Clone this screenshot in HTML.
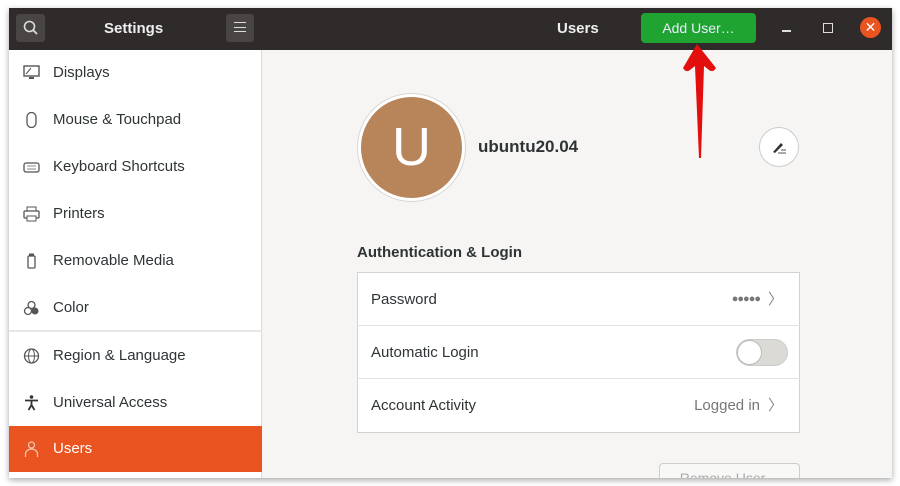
<!DOCTYPE html>
<html><head><style>
*{margin:0;padding:0;box-sizing:border-box}
body{width:900px;height:486px;background:#fff;font-family:"Liberation Sans",sans-serif;position:relative;overflow:hidden}
.win{position:absolute;left:9px;top:8px;width:883px;height:470px;background:#f6f5f4;box-shadow:0 2px 6px rgba(0,0,0,.35);overflow:hidden}
.hb{position:absolute;left:0;top:0;width:883px;height:42px;background:#2f2b2b}
.side{position:absolute;left:0;top:42px;width:253px;height:428px;background:#fff;border-right:1px solid #dcdad7}
.it{position:absolute;left:0;width:253px;height:46px;font-size:15px;color:#2e3436;line-height:46px;padding-left:44px}
.ic{position:absolute;left:14px;top:15px;width:17px;height:16px}
.a{position:absolute;color:#2e3436}
.row{position:absolute;left:0;width:442px;height:53px;border-bottom:1px solid #e4e2df;font-size:15px;line-height:53px;padding-left:13px;color:#2e3436}
</style></head><body>
<div class="win">
<div class="hb">
 <div style="position:absolute;left:7px;top:6px;width:29px;height:28px;background:#4a4545;border-radius:3px"></div>
 <svg style="position:absolute;left:14px;top:12px" width="16" height="16"><circle cx="6.5" cy="6.5" r="5" stroke="#ddd" stroke-width="1.6" fill="none"/><line x1="10" y1="10" x2="14" y2="14" stroke="#ddd" stroke-width="1.8"/></svg>
 <div style="position:absolute;left:95px;top:12px;color:#eee;font-weight:bold;font-size:15px">Settings</div>
 <div style="position:absolute;left:217px;top:6px;width:28px;height:28px;background:#4a4545;border-radius:3px"></div>
 <div style="position:absolute;left:225px;top:14px;width:12px;height:10px;border-top:1.5px solid #ddd;border-bottom:1.5px solid #ddd"></div>
 <div style="position:absolute;left:225px;top:18.5px;width:12px;height:1.5px;background:#ddd"></div>
 <div style="position:absolute;left:548px;top:12px;color:#eee;font-weight:bold;font-size:15px">Users</div>
 <div style="position:absolute;left:632px;top:5px;width:115px;height:30px;background:#1fa331;border-radius:4px;color:#eef;font-size:14px;text-align:center;line-height:30px">Add User…</div>
 <div style="position:absolute;left:773px;top:22px;width:9px;height:2px;background:#ddd"></div>
 <div style="position:absolute;left:814px;top:15px;width:10px;height:10px;border:1.5px solid #ddd"></div>
 <div style="position:absolute;left:851px;top:9px;width:21px;height:21px;border-radius:50%;background:#e95420;color:#fff;text-align:center;line-height:21px;font-size:14px">✕</div>
</div>
<div class="side">
 <div class="it" style="top:0px"><svg class="ic" viewBox="0 0 17 16"><rect x="1" y="1" width="15" height="10" fill="none" stroke="#555" stroke-width="1.4"/><rect x="6" y="12" width="5" height="2" fill="#555"/><path d="M3 9L8 3" stroke="#555"/></svg>Displays</div>
 <div class="it" style="top:47px"><svg class="ic" viewBox="0 0 17 16"><rect x="4" y="0.5" width="9" height="15" rx="4.5" fill="none" stroke="#555" stroke-width="1.3"/></svg>Mouse &amp; Touchpad</div>
 <div class="it" style="top:94px"><svg class="ic" viewBox="0 0 17 16"><rect x="1" y="4" width="15" height="9" rx="2" fill="none" stroke="#555" stroke-width="1.3"/><path d="M4 7h9M4 10h9" stroke="#888"/></svg>Keyboard Shortcuts</div>
 <div class="it" style="top:141px"><svg class="ic" viewBox="0 0 17 16"><rect x="4" y="1" width="9" height="4" fill="none" stroke="#555"/><rect x="1" y="5" width="15" height="7" rx="1" fill="none" stroke="#555" stroke-width="1.3"/><rect x="4" y="10" width="9" height="5" fill="#fff" stroke="#555"/></svg>Printers</div>
 <div class="it" style="top:188px"><svg class="ic" viewBox="0 0 17 16"><rect x="5" y="3" width="7" height="12" rx="1" fill="none" stroke="#555" stroke-width="1.3"/><rect x="6" y="0.5" width="5" height="2" fill="#555"/></svg>Removable Media</div>
 <div class="it" style="top:235px"><svg class="ic" viewBox="0 0 17 16"><circle cx="8.5" cy="5" r="3.5" fill="none" stroke="#555" stroke-width="1.3"/><circle cx="5" cy="11" r="3.5" fill="none" stroke="#555" stroke-width="1.3"/><circle cx="12" cy="11" r="3.5" fill="#555"/></svg>Color</div>
 <div style="position:absolute;left:0;top:280px;width:253px;height:2px;background:#e8e7e5"></div>
 <div class="it" style="top:283px"><svg class="ic" viewBox="0 0 17 16"><circle cx="8.5" cy="8" r="7" fill="none" stroke="#555" stroke-width="1.3"/><ellipse cx="8.5" cy="8" rx="3" ry="7" fill="none" stroke="#555"/><path d="M1.5 8h14" stroke="#555"/></svg>Region &amp; Language</div>
 <div class="it" style="top:330px"><svg class="ic" viewBox="0 0 17 16"><circle cx="8.5" cy="2" r="1.8" fill="#333"/><path d="M2 5.5h13M8.5 5v5M8.5 10l-3 5M8.5 10l3 5" stroke="#333" stroke-width="1.8"/></svg>Universal Access</div>
 <div class="it" style="top:376px;background:#e95420;color:#fff"><svg class="ic" viewBox="0 0 17 16"><circle cx="8.5" cy="4" r="3" fill="none" stroke="#f4c2ae" stroke-width="1.3"/><path d="M2.5 16v-3a6 5 0 0 1 12 0v3" fill="none" stroke="#f4c2ae" stroke-width="1.3"/></svg>Users</div>
</div>
<div style="position:absolute;left:348px;top:85px;width:109px;height:109px;border-radius:50%;border:1.5px solid #d8d6d3;background:#fff"></div>
<div style="position:absolute;left:352px;top:89px;width:101px;height:101px;border-radius:50%;background:#b8845a;color:#fff;text-align:center;line-height:101px;font-size:54px">U</div>
<div class="a" style="left:469px;top:129px;font-weight:bold;font-size:17px">ubuntu20.04</div>
<div style="position:absolute;left:750px;top:119px;width:40px;height:40px;border-radius:50%;border:1px solid #ccc;background:#fff"></div>
<svg style="position:absolute;left:761px;top:131px" width="18" height="16"><path d="M3 13L11 4l2 2-8 8z" fill="#333"/><path d="M8 14h8M11 11h5" stroke="#555"/></svg>
<div class="a" style="left:348px;top:236px;font-weight:bold;font-size:15px">Authentication &amp; Login</div>
<div style="position:absolute;left:348px;top:264px;width:443px;height:161px;border:1px solid #d5d3d0;background:#fff">
 <div class="row" style="top:0">Password<span style="position:absolute;right:40px;font-size:11px;color:#777;letter-spacing:-1px">●●●●●</span><span style="position:absolute;right:17px;color:#888">〉</span></div>
 <div class="row" style="top:53px">Automatic Login<div style="position:absolute;right:12px;top:13px;width:52px;height:27px;border-radius:14px;background:#dcdad7;border:1px solid #ccc"><div style="position:absolute;left:0;top:0;width:25px;height:25px;border-radius:50%;background:#fff;border:1px solid #bbb"></div></div></div>
 <div class="row" style="top:106px;border:none">Account Activity<span style="position:absolute;right:40px;color:#777">Logged in</span><span style="position:absolute;right:17px;color:#888">〉</span></div>
</div>
<div style="position:absolute;left:650px;top:455px;width:141px;height:30px;border:1px solid #d0cecb;border-radius:4px;background:#f8f8f7;color:#aaa;font-size:14px;text-align:center;padding-top:6px">Remove User…</div>
</div>
<svg style="position:absolute;left:675px;top:40px" width="50" height="122"><path d="M22 4L8 28Q11 33 15 30L20 26L24 118L26 118L29 26L34 30Q38 33 41 28Z" fill="#e30f0f"/></svg>
</body></html>
